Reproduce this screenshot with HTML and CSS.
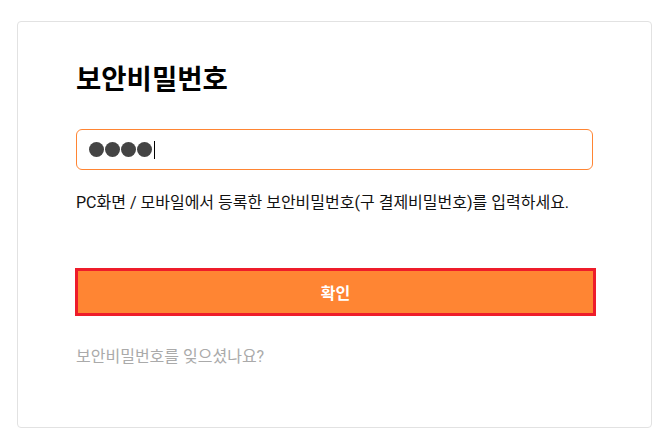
FILE: index.html
```html
<!DOCTYPE html>
<html lang="ko">
<head>
<meta charset="utf-8">
<title>보안비밀번호</title>
<link rel="stylesheet" href="styles.css">
</head>
<body>
<div class="card">
  <h1 class="title">보안비밀번호</h1>
  <div class="field">
    <span class="dot"></span><span class="dot"></span><span class="dot"></span><span class="dot"></span><span class="caret"></span>
  </div>
  <p class="desc">PC화면 / 모바일에서 등록한 보안비밀번호(구 결제비밀번호)를 입력하세요.</p>
  <div class="btn">확인</div>
  <p class="forgot">보안비밀번호를 잊으셨나요?</p>
</div>
</body>
</html>
```
FILE: styles.css
```css
html, body {
  margin: 0;
  padding: 0;
  background: #ffffff;
}
body {
  padding: 21px 16px 0 17px;
  font-family: Roboto, "Noto Sans CJK KR", sans-serif;
  color: #111;
}
.card {
  box-sizing: border-box;
  width: 635px;
  height: 407px;
  border: 1px solid #e2e2e2;
  border-radius: 4px;
  padding: 40px 58px 0 58px;
}
.title {
  margin: 0;
  font-size: 27.5px;
  line-height: 36px;
  font-weight: 700;
  color: #000;
}
.field {
  box-sizing: border-box;
  margin-top: 31px;
  height: 41px;
  width: 517px;
  border: 1px solid #ff8533;
  border-radius: 6px;
  display: flex;
  align-items: center;
  padding-left: 12px;
  gap: 1px;
}
.dot {
  width: 15px;
  height: 15px;
  border-radius: 50%;
  background: #444;
}
.caret {
  width: 1px;
  height: 18px;
  background: #000;
  margin-left: 1px;
}
.desc {
  margin: 22px 0 0 0;
  font-size: 16px;
  line-height: 22px;
  color: #111;
}
.btn {
  box-sizing: border-box;
  margin: 54px 0 0 -1px;
  width: 521px;
  height: 48px;
  border: 3px solid #ee1c2a;
  background: #ff8533;
  color: #fff;
  font-weight: 700;
  font-size: 16px;
  display: flex;
  align-items: center;
  justify-content: center;
}
.forgot {
  margin: 30px 0 0 0;
  font-size: 16px;
  line-height: 22px;
  color: #aaaaaa;
}
```
